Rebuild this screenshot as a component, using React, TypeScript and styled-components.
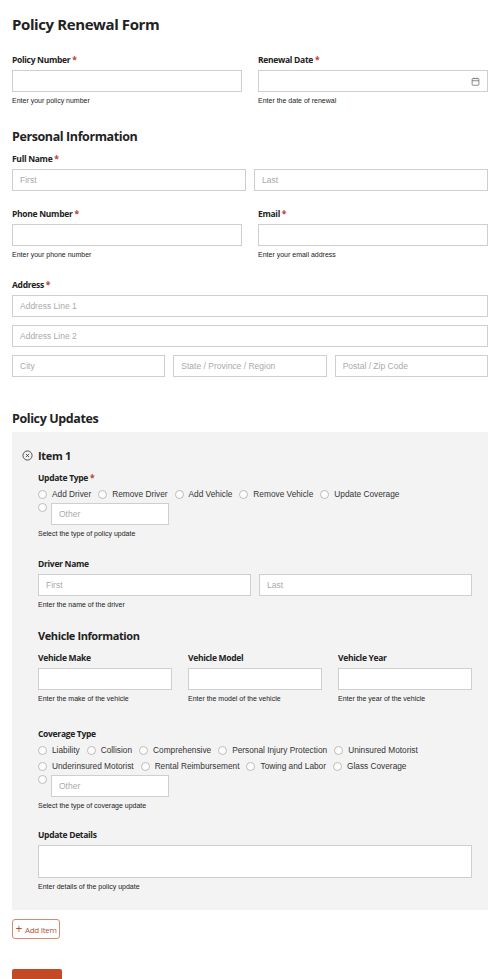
import React from "react";
import styled, { createGlobalStyle } from "styled-components";

const G = createGlobalStyle`
  body { margin: 0; background: #fff; font-family: "Liberation Sans", Arial, sans-serif; color: #222; }
  * { box-sizing: border-box; }
`;
const Page = styled.div`padding: 12px 12px 13px 12px; display: flex; flex-direction: column;`;
const Title = styled.h1`font-family: "Open Sans", sans-serif; font-weight: 700; font-size: 15px; letter-spacing: -0.4px; margin: 2px 0 20px; color: #222;`;
const Heading = styled.h2<{ $mt?: number; $mb?: number }>`font-family: "Open Sans", sans-serif; font-weight: 700; font-size: 12.5px; letter-spacing: -0.4px; margin: ${p => p.$mt ?? 0}px 0 ${p => p.$mb ?? 8}px; color: #222;`;
const Label = styled.div`font-family: "Open Sans", sans-serif; font-weight: 700; font-size: 8.5px; letter-spacing: -0.3px; margin-bottom: 5px; color: #222; span { color: #c0392b; }`;
const Input = styled.div<{ $h?: number }>`height: ${p => p.$h ?? 22}px; flex: none; border: 1px solid #cfcfcf; background: #fff; font-size: 8.5px; color: #aaa; padding: 0 7px; display: flex; align-items: center; justify-content: space-between; min-width: 0;`;
const Help = styled.div`font-size: 7px; color: #222; margin-top: 5px;`;
const Row = styled.div<{ $gap?: number; $cols: number; $mb?: number }>`display: grid; grid-template-columns: repeat(${p => p.$cols}, 1fr); column-gap: ${p => p.$gap ?? 16}px; margin-bottom: ${p => p.$mb ?? 0}px;`;
const Field = styled.div<{ $mb?: number }>`display: flex; flex-direction: column; margin-bottom: ${p => p.$mb ?? 0}px;`;
const Stack = styled.div`display: flex; flex-direction: column; gap: 8px;`;
const Panel = styled.div`background: #f3f3f3; padding: 16px 16px 20px 26px; display: flex; flex-direction: column;`;
const ItemHead = styled.div`display: flex; align-items: center; gap: 5px; margin-left: -16px; margin-bottom: 9px; font-family: "Open Sans", sans-serif; font-weight: 700; font-size: 11px; letter-spacing: -0.3px;`;
const Radios = styled.div`display: flex; flex-wrap: wrap; column-gap: 7px; row-gap: 4px; font-size: 8.3px; color: #333;`;
const Radio = styled.label`display: flex; align-items: center; gap: 5px; height: 12px;`;
const Dot = styled.span`width: 9px; height: 9px; border: 1px solid #bbb; border-radius: 50%; background: #fff; display: inline-block; flex: none;`;
const OtherRow = styled.div`display: flex; align-items: flex-start; gap: 4px; margin-top: 3px; ${Input} { width: 118px; }`;
const AddBtn = styled.div`align-self: flex-start; margin-top: 9px; height: 20px; width: 48px; border: 1px solid #d98a6c; border-radius: 3px; color: #b5522f; font-family: "Open Sans", sans-serif; font-size: 8px; letter-spacing: -0.3px; display: flex; align-items: center; justify-content: center; gap: 3px;`;
const Submit = styled.div`align-self: flex-start; margin-top: 30px; height: 23px; width: 50px; background: #c44a26; border-radius: 2px; color: #fff; font-family: "Open Sans", sans-serif; font-size: 8px; letter-spacing: -0.3px; display: flex; align-items: center; justify-content: center;`;

const Req = () => <span> *</span>;
const R = ({ t }: { t: string }) => <Radio><Dot />{t}</Radio>;

export default function App() {
  return (
    <Page>
      <G />
      <Title>Policy Renewal Form</Title>
      <Row $cols={2} $mb={24}>
        <Field><Label>Policy Number<Req /></Label><Input /><Help>Enter your policy number</Help></Field>
        <Field><Label>Renewal Date<Req /></Label><Input>
          <span />
          <svg width="9" height="9" viewBox="0 0 24 24" fill="none" stroke="#666" strokeWidth="2"><rect x="3" y="4" width="18" height="18" rx="2"/><path d="M16 2v4M8 2v4M3 10h18"/></svg>
        </Input><Help>Enter the date of renewal</Help></Field>
      </Row>
      <Heading $mb={8}>Personal Information</Heading>
      <Label>Full Name<Req /></Label>
      <Row $cols={2} $gap={8} $mb={17}><Input>First</Input><Input>Last</Input></Row>
      <Row $cols={2} $mb={21}>
        <Field><Label>Phone Number<Req /></Label><Input /><Help>Enter your phone number</Help></Field>
        <Field><Label>Email<Req /></Label><Input /><Help>Enter your email address</Help></Field>
      </Row>
      <Label>Address<Req /></Label>
      <Stack>
        <Input>Address Line 1</Input>
        <Input>Address Line 2</Input>
        <Row $cols={3} $gap={8}><Input>City</Input><Input>State / Province / Region</Input><Input>Postal / Zip Code</Input></Row>
      </Stack>
      <Heading $mt={33} $mb={5}>Policy Updates</Heading>
      <Panel>
        <ItemHead>
          <svg width="11" height="11" viewBox="0 0 24 24" fill="none" stroke="#333" strokeWidth="1.8"><circle cx="12" cy="12" r="10"/><path d="M8.5 8.5l7 7M15.5 8.5l-7 7"/></svg>
          Item 1
        </ItemHead>
        <Label>Update Type<Req /></Label>
        <Radios>
          <R t="Add Driver" /><R t="Remove Driver" /><R t="Add Vehicle" /><R t="Remove Vehicle" /><R t="Update Coverage" />
        </Radios>
        <OtherRow><Dot /><Input>Other</Input></OtherRow>
        <Help>Select the type of policy update</Help>
        <Field style={{ marginTop: 21 }}>
          <Label>Driver Name</Label>
          <Row $cols={2} $gap={8}><Input>First</Input><Input>Last</Input></Row>
          <Help>Enter the name of the driver</Help>
        </Field>
        <Heading $mt={20} $mb={9} style={{ fontSize: 11 }}>Vehicle Information</Heading>
        <Row $cols={3} $mb={26}>
          <Field><Label>Vehicle Make</Label><Input /><Help>Enter the make of the vehicle</Help></Field>
          <Field><Label>Vehicle Model</Label><Input /><Help>Enter the model of the vehicle</Help></Field>
          <Field><Label>Vehicle Year</Label><Input /><Help>Enter the year of the vehicle</Help></Field>
        </Row>
        <Label>Coverage Type</Label>
        <Radios>
          <R t="Liability" /><R t="Collision" /><R t="Comprehensive" /><R t="Personal Injury Protection" /><R t="Uninsured Motorist" />
          <R t="Underinsured Motorist" /><R t="Rental Reimbursement" /><R t="Towing and Labor" /><R t="Glass Coverage" />
        </Radios>
        <OtherRow><Dot /><Input>Other</Input></OtherRow>
        <Help>Select the type of coverage update</Help>
        <Field style={{ marginTop: 20 }}>
          <Label>Update Details</Label>
          <Input $h={33} />
          <Help>Enter details of the policy update</Help>
        </Field>
      </Panel>
      <AddBtn><span style={{ fontSize: 12, lineHeight: 1 }}>+</span>Add Item</AddBtn>
      <Submit>Submit</Submit>
    </Page>
  );
}
